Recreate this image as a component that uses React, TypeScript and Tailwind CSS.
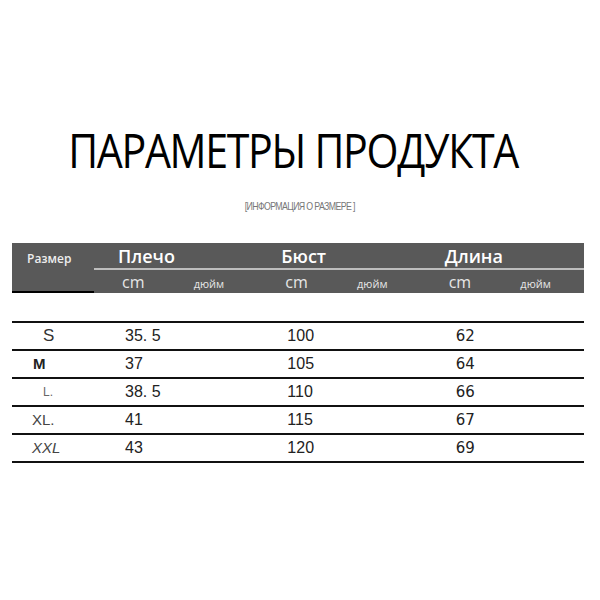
import { Fragment } from "react";

const rows = [
  { size: "S", cls: "pl-[31px] text-[17px] font-light text-[#333]", a: "35. 5", b: "100", c: "62" },
  { size: "M", cls: "pl-[21px] text-[15px] font-bold text-[#222]", a: "37", b: "105", c: "64" },
  { size: "L.", cls: "pl-[31px] text-[12px] text-[#666]", a: "38. 5", b: "110", c: "66" },
  { size: "XL.", cls: "pl-[20px] text-[15px] text-[#444]", a: "41", b: "115", c: "67" },
  { size: "XXL", cls: "pl-[20px] text-[15px] italic text-[#444]", a: "43", b: "120", c: "69" },
];

const groups = ["Плечо", "Бюст", "Длина"];

export default function App() {
  return (
    <div className="w-[600px] h-[600px] bg-white font-['Liberation_Sans',sans-serif]">
      <div className="pt-[120px] flex flex-col items-center">
        <h1 className="mr-[14px] font-['Open_Sans',sans-serif] text-[47px] leading-[60px] tracking-[-1.5px] text-black scale-x-[0.875]">
          ПАРАМЕТРЫ ПРОДУКТА
        </h1>
        <p className="mt-[19px] text-[11px] leading-[14px] text-[#777] tracking-[-0.8px] scale-x-[0.8]">
          [ИНФОРМАЦИЯ О РАЗМЕРЕ ]
        </p>
      </div>

      <div className="mx-[12px] mt-[30px] w-[572px]">
        <div className="bg-[#595959] h-[50px] grid grid-cols-[82px_1fr] font-['Open_Sans',sans-serif]">
          <div className="flex flex-col">
            <div className="h-[48px] pl-[15px] pt-[7px] text-[12px] font-semibold text-[#eee]">Размер</div>
            <div className="h-[2px] bg-black" />
          </div>
          <div className="flex flex-col">
            <div className="h-[27px] grid grid-cols-3 border-b-2 border-[#bdbdbd]">
              {groups.map((g) => (
                <div key={g} className="pl-[24px] text-[18px] leading-[27px] font-semibold text-white">
                  {g}
                </div>
              ))}
            </div>
            <div className="h-[23px] grid grid-cols-6 text-[#e6e6e6]">
              {groups.map((g) => (
                <Fragment key={g}>
                  <div className="pl-[28px] text-[16px] leading-[24px]">cm</div>
                  <div className="pl-[18px] text-[11px] leading-[27px]">дюйм</div>
                </Fragment>
              ))}
            </div>
          </div>
        </div>

        <div className="mt-[28px] border-t-2 border-[#111]">
          {rows.map((r) => (
            <div
              key={r.size}
              className="h-[28px] grid grid-cols-[82px_1fr_1fr_1fr] items-center border-b-2 border-[#111] text-[16px] text-[#222]"
            >
              <div className={r.cls}>{r.size}</div>
              <div className="pl-[31px]">{r.a}</div>
              <div className="pl-[30px]">{r.b}</div>
              <div className="pl-[35px] font-['DejaVu_Sans',sans-serif] text-[15px]">{r.c}</div>
            </div>
          ))}
        </div>
      </div>
    </div>
  );
}
